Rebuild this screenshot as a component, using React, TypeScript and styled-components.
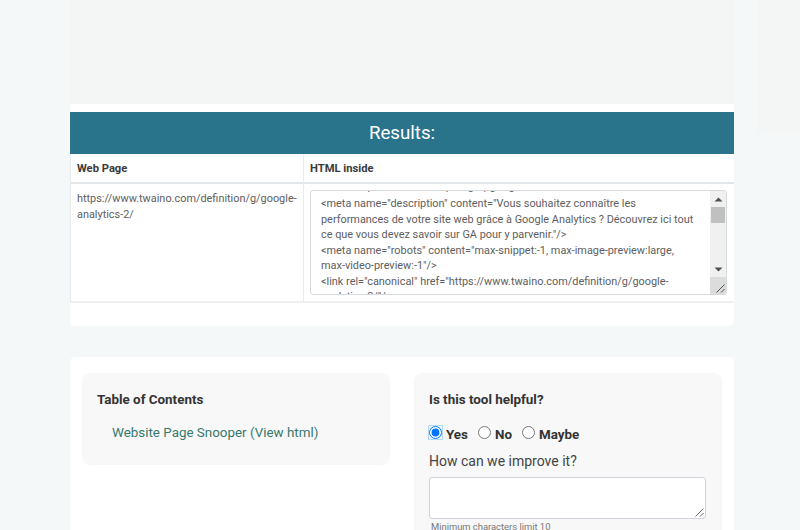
import React from 'react';
import styled, { createGlobalStyle } from 'styled-components';

const HTML_LINES = [
  '<link rel="profile" href="https://gmpg.org/"/>',
  '<meta name="description" content="Vous souhaitez connaître les',
  'performances de votre site web grâce à Google Analytics ? Découvrez ici tout',
  'ce que vous devez savoir sur GA pour y parvenir."/>',
  '<meta name="robots" content="max-snippet:-1, max-image-preview:large,',
  'max-video-preview:-1"/>',
  '<link rel="canonical" href="https://www.twaino.com/definition/g/google-',
  'analytics-2/"/>',
];

const GlobalStyle = createGlobalStyle`
  html, body {
    margin: 0;
    height: 530px;
    overflow: hidden;
    background: #f4f8f9;
    font-family: Roboto, "Liberation Sans", sans-serif;
  }
`;

const ScrollArrow: React.FC<{ down?: boolean }> = ({ down }) => (
  <svg width="9" height="5" viewBox="0 0 9 5">
    <path d={down ? 'M0.5 0.5H8.5L4.5 4.5Z' : 'M0.5 4.5H8.5L4.5 0.5Z'} fill="#505050" />
  </svg>
);

const Grip: React.FC<{ color: string }> = ({ color }) => (
  <svg width="9" height="9" viewBox="0 0 9 9">
    <path d="M0.5 8.5L8.5 0.5M5 8.5L8.5 5" stroke={color} strokeWidth="1" fill="none" />
  </svg>
);

export default function App() {
  return (
    <>
      <GlobalStyle />
      <Page>
        <Main>
          <AdSlot />
          <ResultsCard>
            <ResultsTitle>Results:</ResultsTitle>
            <ResultsTable>
              <HeadCell>Web Page</HeadCell>
              <HeadCell>HTML inside</HeadCell>
              <BodyCell>
                <UrlText>https://www.twaino.com/definition/g/google-analytics-2/</UrlText>
              </BodyCell>
              <BodyCell>
                <CodeBox>
                  <CodeText>
                    {HTML_LINES.map((line) => (
                      <CodeLine key={line}>{line}</CodeLine>
                    ))}
                  </CodeText>
                  <ScrollBar>
                    <ArrowButton>
                      <ScrollArrow />
                    </ArrowButton>
                    <Thumb />
                    <ScrollGap />
                    <ArrowButton>
                      <ScrollArrow down />
                    </ArrowButton>
                    <Corner>
                      <Grip color="#555" />
                    </Corner>
                  </ScrollBar>
                </CodeBox>
              </BodyCell>
            </ResultsTable>
          </ResultsCard>
          <BottomCard>
            <Panel>
              <PanelTitle>Table of Contents</PanelTitle>
              <TocLink href="#snooper">Website Page Snooper (View html)</TocLink>
            </Panel>
            <Panel>
              <PanelTitle>Is this tool helpful?</PanelTitle>
              <RadioRow>
                <RadioLabel>
                  <Radio type="radio" name="helpful" defaultChecked />
                  Yes
                </RadioLabel>
                <RadioLabel>
                  <Radio type="radio" name="helpful" />
                  No
                </RadioLabel>
                <RadioLabel>
                  <Radio type="radio" name="helpful" />
                  Maybe
                </RadioLabel>
              </RadioRow>
              <ImproveLabel>How can we improve it?</ImproveLabel>
              <Feedback>
                <FeedbackGrip>
                  <Grip color="#666" />
                </FeedbackGrip>
              </Feedback>
              <Hint>Minimum characters limit 10</Hint>
            </Panel>
          </BottomCard>
        </Main>
        <SideAd />
      </Page>
    </>
  );
}

const Page = styled.div`
  display: flex;
  align-items: flex-start;
  gap: 23px;
  height: 530px;
  padding-left: 70px;
  overflow: hidden;
`;

const Main = styled.main`
  width: 664px;
  flex-shrink: 0;
`;

const AdSlot = styled.div`
  height: 104px;
  background: #f4f5f5;
`;

const SideAd = styled.aside`
  width: 43px;
  height: 133px;
  background: #f4f5f5;
`;

const ResultsCard = styled.section`
  height: 222px;
  padding-top: 8px;
  box-sizing: border-box;
  background: #fff;
  border-radius: 0 0 5px 5px;
`;

const ResultsTitle = styled.h2`
  margin: 0;
  height: 42px;
  line-height: 42px;
  text-align: center;
  font-size: 18.7px;
  font-weight: 400;
  color: #fff;
  background: #2a748b;
`;

const ResultsTable = styled.div`
  display: grid;
  grid-template-columns: 232px 431px;
  grid-template-rows: 30px 117px;
  border-left: 1px solid #e9ecef;
  border-bottom: 2px solid #eef0f1;
`;

const HeadCell = styled.div`
  padding-left: 6px;
  line-height: 29px;
  font-size: 11.2px;
  font-weight: 700;
  color: #3a3a3a;
  border-bottom: 2px solid #e3e6e8;
  & + & {
    border-left: 1px solid #e9ecef;
  }
`;

const BodyCell = styled.div`
  padding: 6px 7px 0 6px;
  font-size: 10.9px;
  line-height: 15.5px;
  color: #5e5e5e;
  & + & {
    border-left: 1px solid #e9ecef;
  }
`;

const UrlText = styled.div`
  padding-top: 1px;
`;

const CodeBox = styled.div`
  display: flex;
  height: 105px;
  box-sizing: border-box;
  border: 1px solid #d8dbdd;
  border-radius: 3px;
  overflow: hidden;
`;

const CodeText = styled.div`
  flex: 1;
  min-width: 0;
  padding: 0 10px;
  overflow: hidden;
  white-space: nowrap;
`;

const CodeLine = styled.div`
  &:first-child {
    margin-top: -12px;
    margin-bottom: 1.5px;
  }
`;

const ScrollBar = styled.div`
  width: 16px;
  flex-shrink: 0;
  display: flex;
  flex-direction: column;
  background: #f0f0f0;
`;

const ArrowButton = styled.div`
  height: 16px;
  display: flex;
  align-items: center;
  justify-content: center;
`;

const Thumb = styled.div`
  height: 16px;
  margin: 0 1px;
  background: #c0c0c0;
`;

const ScrollGap = styled.div`
  flex: 1;
`;

const Corner = styled.div`
  height: 17px;
  display: flex;
  align-items: flex-end;
  justify-content: flex-end;
  padding: 0 1px 1px 0;
  box-sizing: border-box;
  background: #dcdcdc;
`;

const BottomCard = styled.section`
  display: grid;
  grid-template-columns: 308px 308px;
  align-items: start;
  gap: 24px;
  margin-top: 31px;
  padding: 16px 12px;
  background: #fff;
  border-radius: 5px 5px 0 0;
`;

const Panel = styled.div`
  padding: 17px 16px 15px 15px;
  background: #f8f8f8;
  border-radius: 8px;
`;

const PanelTitle = styled.h3`
  margin: 0 0 13px;
  font-size: 13.4px;
  line-height: 20px;
  font-weight: 700;
  color: #333;
`;

const TocLink = styled.a`
  display: block;
  padding: 0 0 7px 15px;
  font-size: 13.4px;
  line-height: 20px;
  color: #37796d;
  text-decoration: none;
`;

const RadioRow = styled.div`
  display: flex;
  gap: 10px;
  margin-bottom: 6px;
`;

const RadioLabel = styled.label`
  display: flex;
  align-items: flex-start;
  gap: 4px;
  padding-top: 2px;
  font-size: 13.4px;
  line-height: 20px;
  font-weight: 700;
  color: #333;
`;

const Radio = styled.input`
  width: 13px;
  height: 13px;
  margin: 1px 0 0;
  &:checked {
    box-shadow: 0 0 0 1px #b5d8ff;
    border-radius: 50%;
  }
`;

const ImproveLabel = styled.div`
  margin-bottom: 6px;
  font-size: 14px;
  line-height: 20px;
  color: #444;
`;

const Feedback = styled.div`
  position: relative;
  height: 42px;
  box-sizing: border-box;
  background: #fff;
  border: 1px solid #ced4da;
  border-radius: 3px;
`;

const FeedbackGrip = styled.span`
  position: absolute;
  right: 1px;
  bottom: 1px;
  display: flex;
`;

const Hint = styled.div`
  padding: 1px 0 0 2px;
  font-size: 9.4px;
  line-height: 14px;
  color: #777;
`;
